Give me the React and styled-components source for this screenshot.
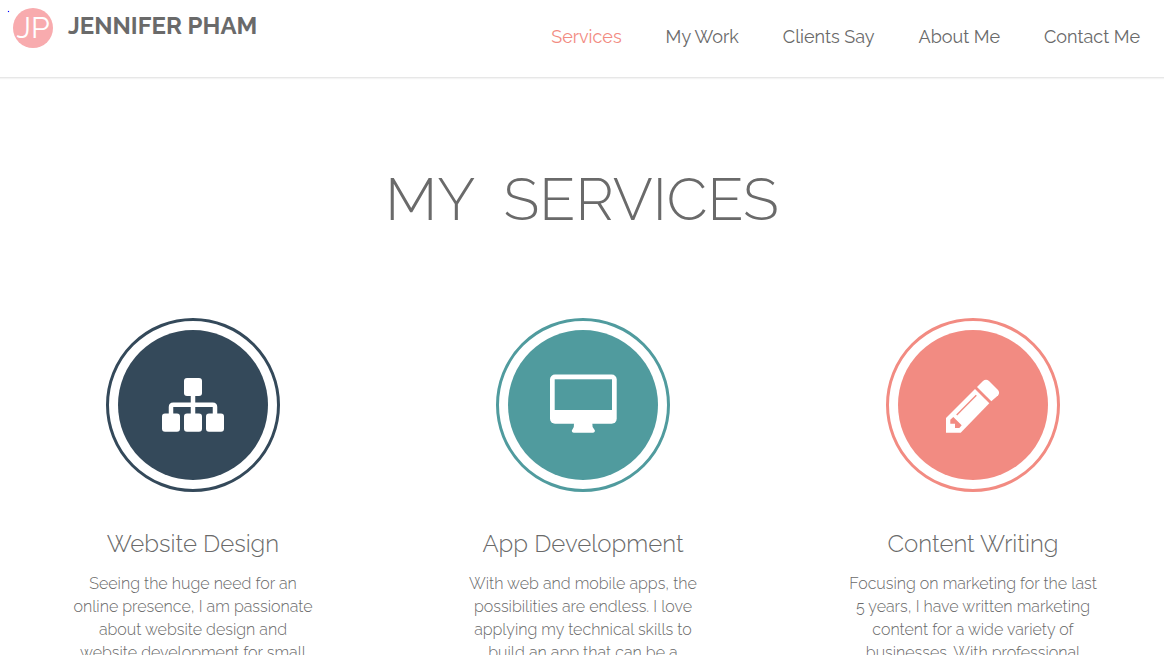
import React from "react";
import styled, { createGlobalStyle } from "styled-components";

const GlobalStyle = createGlobalStyle`
  *, *::before, *::after { box-sizing: border-box; }
  html { scrollbar-width: none; }
  body {
    margin: 0;
    overflow-x: hidden;
    background: #fff;
    color: #6a6a6a;
    font-family: Raleway, Lato, "Open Sans", sans-serif;
    font-size: 16px;
  }
`;

const Header = styled.header`
  display: flex;
  justify-content: space-between;
  align-items: flex-start;
  height: 78px;
  padding: 8px 24px 0 8px;
  border-bottom: 1px solid #e7e7e7;
  box-shadow: 0 1px 1px #f4f4f4;
`;

const Brand = styled.a`
  display: flex;
  align-items: flex-start;
  color: inherit;
  text-decoration: none;
`;

const Dot = styled.span`
  width: 1px;
  height: 1px;
  margin: 3px 4px 0 0;
  background: #0000ff;
  box-shadow: 0 0 1px #0000ff;
`;

const Logo = styled.svg`
  width: 40px;
  height: 40px;
  margin-right: 15px;
`;

const BrandName = styled.span`
  font-size: 24px;
  font-weight: 700;
  line-height: 36px;
`;

const Nav = styled.nav`
  display: flex;
  gap: 44px;
  padding-top: 16px;
`;

const NavLink = styled.a`
  color: ${({ $active }) => ($active ? "#f28b82" : "#6a6a6a")};
  font-size: 18px;
  line-height: 26px;
  text-decoration: none;
`;

const Title = styled.h1`
  margin: 87px 0 83px;
  font-size: 59px;
  font-weight: 300;
  line-height: 70px;
  text-align: center;
  white-space: pre;
`;

const Services = styled.section`
  display: grid;
  grid-template-columns: repeat(3, 1fr);
  margin: 0 -4px 0 -2px;
`;

const Service = styled.article`
  display: flex;
  flex-direction: column;
  align-items: center;
  text-align: center;
`;

const Ring = styled.div`
  padding: 9px;
  border: 3px solid ${({ $color }) => $color};
  border-radius: 50%;
`;

const Disc = styled.div`
  width: 150px;
  height: 150px;
  border-radius: 50%;
  background: ${({ $color }) => $color};
  color: ${({ $color }) => $color};

  svg { display: block; }
`;

const ServiceName = styled.h2`
  margin: 36px 0 12px;
  font-size: 24px;
  font-weight: 300;
  line-height: 32px;
`;

const Description = styled.p`
  margin: 0;
  font-weight: 300;
  line-height: 23px;
`;

const Line = styled.span`
  display: block;
  white-space: nowrap;
`;

const Sitemap = () => (
  <svg width="150" height="150" viewBox="0 0 150 150" aria-hidden="true">
    <g fill="#fff">
      <rect x="66" y="48" width="18" height="18" rx="3" />
      <rect x="44" y="83.5" width="18" height="18.2" rx="3" />
      <rect x="66" y="83.5" width="18" height="18.2" rx="3" />
      <rect x="88" y="83.5" width="18" height="18.2" rx="3" />
    </g>
    <path d="M75 65v20M53 85v-8q0-2.3 2.3-2.3h39.4q2.3 0 2.3 2.3v8" fill="none" stroke="#fff" strokeWidth="4.5" />
  </svg>
);

const Monitor = () => (
  <svg width="150" height="150" viewBox="0 0 150 150" aria-hidden="true">
    <rect x="42" y="44.5" width="66.7" height="49.2" rx="5" fill="#fff" />
    <rect x="46.7" y="49.3" width="57.3" height="30.7" fill="currentColor" />
    <path d="M66 93h18.3q-.3 4 1.7 6 1.5 1.5.7 2.7-.6 1-2 1H66q-1.4 0-2-1-.7-1.2.7-2.7 1.6-2 1.3-6z" fill="#fff" />
  </svg>
);

const Pencil = () => (
  <svg width="150" height="150" viewBox="0 0 150 150" aria-hidden="true">
    <path d="M48 88l29-29 14.3 14.3-28.6 29.4H48z" fill="#fff" />
    <path d="M79 57l6-6q3-2.3 6 0l9 9q2 2.6.2 5.300L93.300 71.300z" fill="#fff" />
    <path d="M58.7 85l19.600-19.700" stroke="currentColor" strokeWidth="1.4" />
    <path d="M55.3 87l8.4 8.3-2.4 2.7H57v-4.3h-4.7v-4z" fill="currentColor" />
  </svg>
);

const services = [
  {
    name: "Website Design",
    color: "#34495a",
    Icon: Sitemap,
    lines: [
      "Seeing the huge need for an",
      "online presence, I am passionate",
      "about website design and",
      "website development for small",
    ],
  },
  {
    name: "App Development",
    color: "#509b9e",
    Icon: Monitor,
    lines: [
      "With web and mobile apps, the",
      "possibilities are endless. I love",
      "applying my technical skills to",
      "build an app that can be a",
    ],
  },
  {
    name: "Content Writing",
    color: "#f28b82",
    Icon: Pencil,
    lines: [
      "Focusing on marketing for the last",
      "5 years, I have written marketing",
      "content for a wide variety of",
      "businesses. With professional",
    ],
  },
];

const links = ["Services", "My Work", "Clients Say", "About Me", "Contact Me"];

export default function App() {
  return (
    <>
      <GlobalStyle />
      <Header>
        <Brand href="#top">
          <Dot />
          <Logo viewBox="0 0 40 40" aria-hidden="true">
            <circle cx="20" cy="20" r="20" fill="#f8abae" />
            <text x="20" y="30" textAnchor="middle" fill="#fff" fontSize="30" fontWeight="400">JP</text>
          </Logo>
          <BrandName>JENNIFER PHAM</BrandName>
        </Brand>
        <Nav>
          {links.map((label, i) => (
            <NavLink key={label} href="#" $active={i === 0}>{label}</NavLink>
          ))}
        </Nav>
      </Header>
      <main>
        <Title>{"MY  SERVICES"}</Title>
        <Services>
          {services.map(({ name, color, Icon, lines }) => (
            <Service key={name}>
              <Ring $color={color}>
                <Disc $color={color}><Icon /></Disc>
              </Ring>
              <ServiceName>{name}</ServiceName>
              <Description>
                {lines.map((line) => <Line key={line}>{line} </Line>)}
              </Description>
            </Service>
          ))}
        </Services>
      </main>
    </>
  );
}
